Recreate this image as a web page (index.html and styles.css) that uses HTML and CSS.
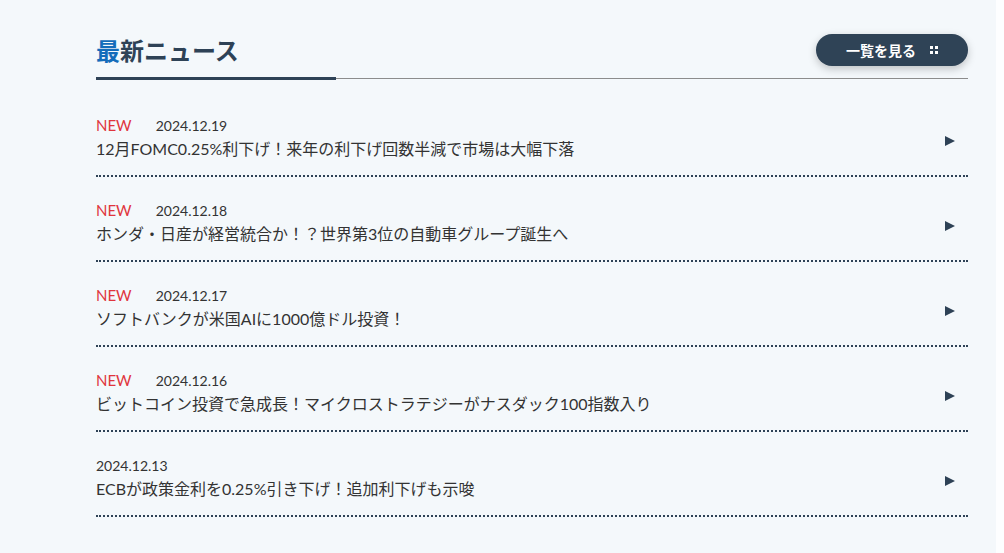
FILE: index.html
```html
<!DOCTYPE html>
<html lang="ja">
<head>
<meta charset="utf-8">
<title>最新ニュース</title>
<link rel="stylesheet" href="styles.css">
</head>
<body>
<div class="page">
<section class="news">
  <header class="news-head">
    <h2 class="news-title"><span class="accent">最</span>新ニュース</h2>
    <a class="more-btn" href="#">一覧を見る
      <svg class="dots" width="8" height="8" viewBox="0 0 8 8"><rect x="0" y="0" width="3" height="3" fill="#fff"/><rect x="5" y="0" width="3" height="3" fill="#fff"/><rect x="0" y="5" width="3" height="3" fill="#fff"/><rect x="5" y="5" width="3" height="3" fill="#fff"/></svg>
    </a>
  </header>
  <ul class="news-list">
    <li class="news-item">
      <div class="news-body">
        <div class="meta"><span class="new">NEW</span><span class="date">2024.12.19</span></div>
        <p class="headline">12月FOMC0.25%利下げ！来年の利下げ回数半減で市場は大幅下落</p>
      </div>
      <span class="arrow"></span>
    </li>
    <li class="news-item">
      <div class="news-body">
        <div class="meta"><span class="new">NEW</span><span class="date">2024.12.18</span></div>
        <p class="headline">ホンダ・日産が経営統合か！？世界第3位の自動車グループ誕生へ</p>
      </div>
      <span class="arrow"></span>
    </li>
    <li class="news-item">
      <div class="news-body">
        <div class="meta"><span class="new">NEW</span><span class="date">2024.12.17</span></div>
        <p class="headline">ソフトバンクが米国AIに1000億ドル投資！</p>
      </div>
      <span class="arrow"></span>
    </li>
    <li class="news-item">
      <div class="news-body">
        <div class="meta"><span class="new">NEW</span><span class="date">2024.12.16</span></div>
        <p class="headline">ビットコイン投資で急成長！マイクロストラテジーがナスダック100指数入り</p>
      </div>
      <span class="arrow"></span>
    </li>
    <li class="news-item">
      <div class="news-body">
        <div class="meta"><span class="date">2024.12.13</span></div>
        <p class="headline">ECBが政策金利を0.25%引き下げ！追加利下げも示唆</p>
      </div>
      <span class="arrow"></span>
    </li>
  </ul>
</section>
</div>
</body>
</html>
```

FILE: styles.css
```css
html, body {
  margin: 0;
  padding: 0;
  background: #fdfeff;
}
body {
  font-family: Lato, "Noto Sans CJK JP", sans-serif;
  color: #333;
}
.page {
  width: 996px;
  min-height: 553px;
  background: #f4f8fb;
}
.news {
  width: 872px;
  margin-left: 96px;
  padding-top: 22px;
}
.news-head {
  position: relative;
  height: 56px;
  display: flex;
  align-items: center;
  justify-content: space-between;
  border-bottom: 1px solid #8c8c8c;
}
.news-title {
  margin: 0;
  font-family: "Noto Sans CJK JP", sans-serif;
  font-size: 24px;
  font-weight: 700;
  line-height: 32px;
  color: #2e4256;
}
.news-title::after {
  content: "";
  position: absolute;
  left: 0;
  bottom: -2px;
  width: 240px;
  height: 3px;
  background: #2e4256;
}
.accent {
  color: #146cba;
}
.more-btn {
  display: flex;
  align-items: center;
  gap: 14px;
  height: 32px;
  padding: 0 30px;
  border-radius: 16px;
  background: #2f4356;
  color: #fff;
  font-family: "Noto Sans CJK JP", sans-serif;
  font-size: 14px;
  font-weight: 700;
  text-decoration: none;
  box-shadow: 0 3px 8px rgba(0, 0, 0, 0.22);
}
.dots {
  display: block;
}
.news-list {
  list-style: none;
  margin: 13px 0 0;
  padding: 0;
}
.news-item {
  display: flex;
  align-items: center;
  justify-content: space-between;
  padding: 23px 0 14px;
  border-bottom: 2px dotted #2e4256;
}
.meta {
  display: flex;
  align-items: center;
  height: 20px;
}
.new {
  color: #e0353d;
  font-size: 15px;
  margin-right: 24px;
}
.date {
  font-size: 14px;
  color: #333;
}
.headline {
  margin: 2px 0 0;
  font-size: 16px;
  line-height: 24px;
  color: #333;
}
.arrow {
  width: 0;
  height: 0;
  border-left: 10px solid #2e4256;
  border-top: 5px solid transparent;
  border-bottom: 5px solid transparent;
  margin-right: 13px;
  margin-top: 6px;
}
```
